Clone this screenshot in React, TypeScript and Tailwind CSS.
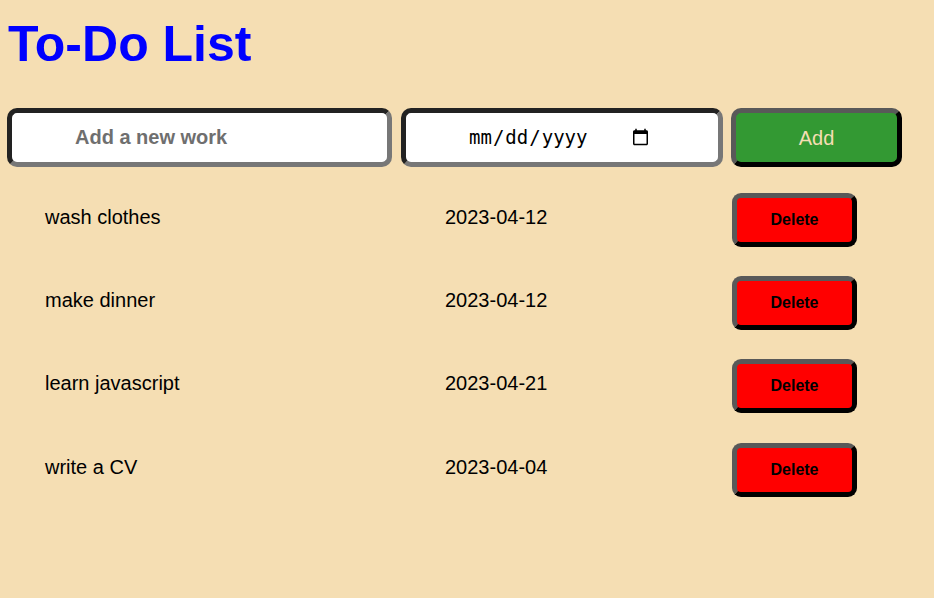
import { useState } from "react";

type Todo = { name: string; date: string };

const initial: Todo[] = [
  { name: "wash clothes", date: "2023-04-12" },
  { name: "make dinner", date: "2023-04-12" },
  { name: "learn javascript", date: "2023-04-21" },
  { name: "write a CV", date: "2023-04-04" },
];

const App = () => {
  const [todos, setTodos] = useState<Todo[]>(initial);
  const [name, setName] = useState("");
  const [date, setDate] = useState("");

  const addTodo = () => {
    if (!name) return;
    setTodos([...todos, { name, date }]);
    setName("");
    setDate("");
  };

  return (
    <div className="min-h-screen bg-[#f5deb3] px-2 pt-4 font-['Liberation_Sans',Arial,sans-serif]">
      <h1 className="text-[50px] leading-[57px] font-bold text-[#0000ff]">To-Do List</h1>

      <div className="flex items-center mt-[35px]">
        <input
          className="w-[385px] h-[59px] -ml-px bg-white rounded-[10px] border-[5px] border-t-[#222] border-l-[#222] border-r-[#777] border-b-[#777] pl-[63px] text-[20px] font-bold text-black placeholder:text-[#6f6f6f] outline-none"
          placeholder="Add a new work"
          value={name}
          onChange={(e) => setName(e.target.value)}
        />
        <input
          type="date"
          className="ml-[9px] w-[322px] h-[59px] bg-white rounded-[10px] border-[5px] border-t-[#222] border-l-[#222] border-r-[#777] border-b-[#777] pl-[62px] pr-[66px] text-[19px] font-['DejaVu_Sans_Mono',monospace] text-black outline-none"
          value={date}
          onChange={(e) => setDate(e.target.value)}
        />
        <button
          className="ml-[8px] w-[171px] h-[59px] bg-[#339933] rounded-[10px] border-[5px] border-t-[#595959] border-l-[#595959] border-r-black border-b-black text-[20px] text-[#f5deb3]"
          onClick={addTodo}
        >
          Add
        </button>
      </div>

      <div className="mt-[11px]">
        {todos.map((t, i) => (
          <div key={i} className="flex items-center h-[83.33px] text-[20px] text-black">
            <div className="w-[437px] pl-[37px] mb-[6px]">{t.name}</div>
            <div className="w-[287px] mb-[6px]">{t.date}</div>
            <button
              className="w-[125px] h-[54px] bg-[#ff0000] rounded-[9px] border-[5px] border-t-[#595959] border-l-[#595959] border-r-black border-b-black text-[16px] font-bold text-black"
              onClick={() => setTodos(todos.filter((_, j) => j !== i))}
            >
              Delete
            </button>
          </div>
        ))}
      </div>
    </div>
  );
};

export default App;
